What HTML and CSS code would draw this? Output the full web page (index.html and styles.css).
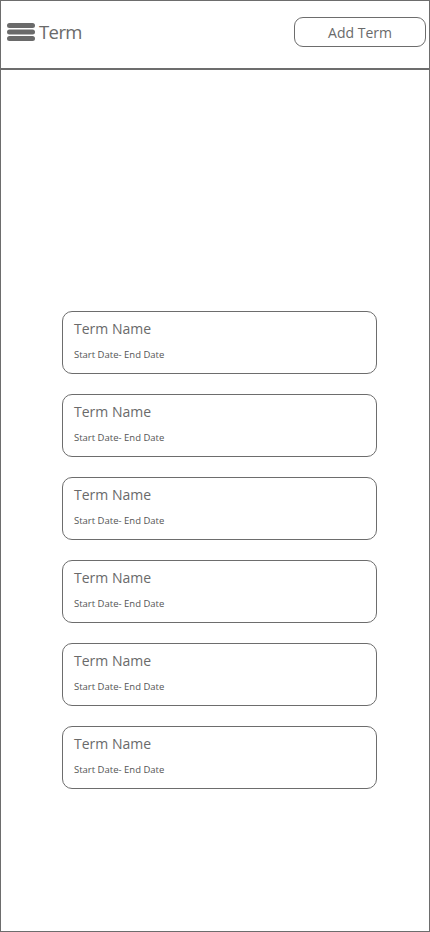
FILE: index.html
```html
<!DOCTYPE html>
<html>
<head>
<meta charset="utf-8">
<link rel="stylesheet" href="styles.css">
</head>
<body>
<div class="frame">
  <header class="header">
    <div class="brand">
      <svg class="menu" width="28" height="20" viewBox="0 0 28 20">
        <rect x="0" y="1" width="28" height="5" rx="2.5" fill="#6a6a6a"/>
        <rect x="0" y="7.5" width="28" height="5" rx="2.5" fill="#6a6a6a"/>
        <rect x="0" y="14" width="28" height="5" rx="2.5" fill="#6a6a6a"/>
      </svg>
      <span class="title">Term</span>
    </div>
    <button class="add">Add Term</button>
  </header>
  <main class="list">
    <div class="card"><div class="name">Term Name</div><div class="dates">Start Date- End Date</div></div>
    <div class="card"><div class="name">Term Name</div><div class="dates">Start Date- End Date</div></div>
    <div class="card"><div class="name">Term Name</div><div class="dates">Start Date- End Date</div></div>
    <div class="card"><div class="name">Term Name</div><div class="dates">Start Date- End Date</div></div>
    <div class="card"><div class="name">Term Name</div><div class="dates">Start Date- End Date</div></div>
    <div class="card"><div class="name">Term Name</div><div class="dates">Start Date- End Date</div></div>
  </main>
</div>
</body>
</html>
```
FILE: styles.css
```css
* { box-sizing: border-box; }
html, body { margin: 0; padding: 0; background: #fff; }
body { font-family: "Open Sans", "Liberation Sans", sans-serif; color: #666; }
.frame {
  width: 430px;
  height: 932px;
  border: 1px solid #6d6d6d;
  display: flex;
  flex-direction: column;
}
.header {
  height: 69px;
  border-bottom: 2px solid #6d6d6d;
  display: flex;
  align-items: center;
  justify-content: space-between;
  padding: 0 3px 0 6px;
}
.brand { display: flex; align-items: center; gap: 4px; margin-top: -5px; }
.menu { display: block; }
.title { font-size: 18.5px; letter-spacing: -0.6px; color: #6a6a6a; line-height: 1; }
.add {
  width: 132px;
  height: 30px;
  margin-top: -5px;
  border: 1px solid #6d6d6d;
  border-radius: 9px;
  background: #fff;
  font-family: "Open Sans", "Liberation Sans", sans-serif;
  font-size: 14px;
  color: #6a6a6a;
  padding: 0;
}
.list {
  padding: 241px 0 0 61px;
  display: flex;
  flex-direction: column;
  gap: 20px;
}
.card {
  width: 315px;
  height: 63px;
  border: 1px solid #6d6d6d;
  border-radius: 10px;
  padding: 7px 11px 0;
}
.name { font-size: 14px; line-height: 20px; color: #6a6a6a; }
.dates { font-size: 9.5px; line-height: 14px; margin-top: 9px; color: #555; }
```
